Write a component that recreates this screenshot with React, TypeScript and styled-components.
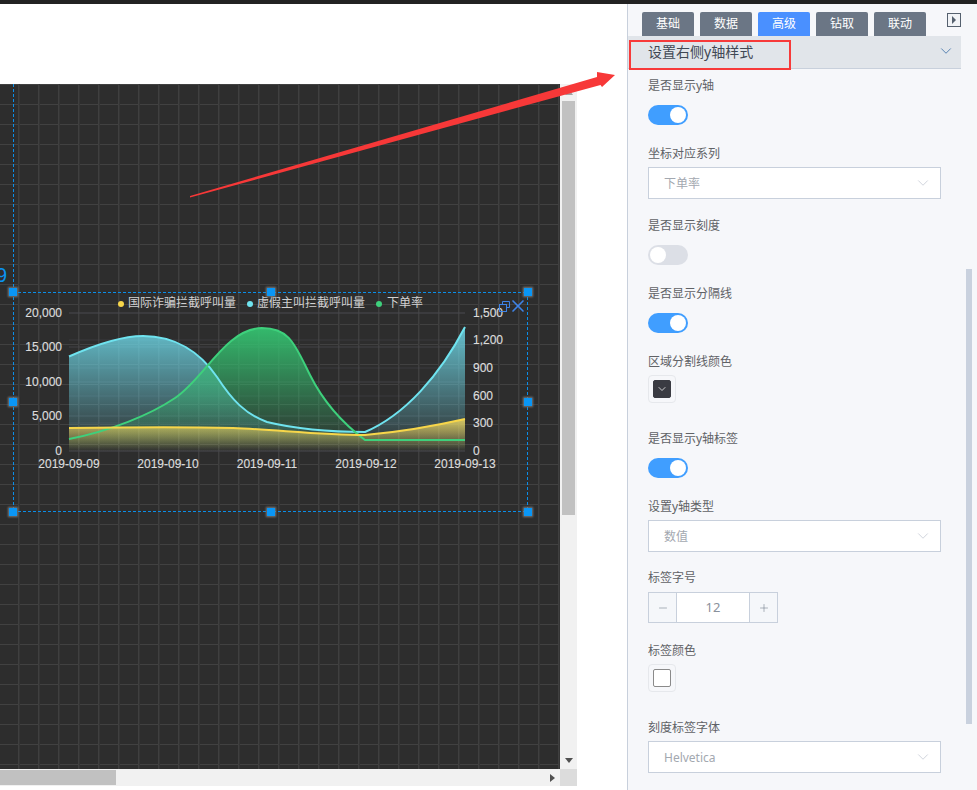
import React from 'react'
import styled, { createGlobalStyle } from 'styled-components'
import { ChevronDown, Minus, Plus, X } from 'lucide-react'

const GlobalStyle = createGlobalStyle`
  html, body {
    margin: 0;
    padding: 0;
    background: #fff;
    overflow: hidden;
  }
  body {
    font-family: "Noto Sans", "Noto Sans CJK SC", sans-serif;
  }
`

const Page = styled.div`
  position: relative;
  width: 977px;
  height: 790px;
  overflow: hidden;
  display: flex;
  flex-direction: column;
`

const TopBar = styled.div`
  height: 4px;
  flex: none;
  background: #222;
`

const Main = styled.div`
  flex: 1;
  display: flex;
  min-height: 0;
`

const Stage = styled.div`
  width: 627px;
  flex: none;
  padding-top: 80px;
  box-sizing: border-box;
  background: #fff;
`

const StageRow = styled.div`
  display: flex;
  width: 577px;
`

const Canvas = styled.div`
  position: relative;
  width: 560px;
  height: 685px;
  background-color: #2d2d2d;
  background-image:
    linear-gradient(to right, #3f3f3f 1px, #353535 1px, #353535 2px, transparent 2px),
    linear-gradient(to bottom, #414141 1px, transparent 1px);
  background-size: 20px 20px;
  background-position: -2px 0, 0 0;
`

const VScroll = styled.div`
  width: 17px;
  height: 685px;
  background: #f1f1f1;
  display: flex;
  flex-direction: column;
  align-items: center;
`

const HScroll = styled.div`
  width: 560px;
  height: 17px;
  background: #f1f1f1;
  display: flex;
  align-items: center;
`

const ScrollCorner = styled.div`
  width: 17px;
  height: 17px;
  background: #dcdcdc;
`

const VThumb = styled.div`
  width: 13px;
  height: 414px;
  background: #c1c1c1;
  margin-top: 6px;
`

const HThumb = styled.div`
  width: 116px;
  height: 15px;
  background: #c1c1c1;
`

const ArrowUp = styled.span`
  margin-top: 5px;
  border-left: 4px solid transparent;
  border-right: 4px solid transparent;
  border-bottom: 6px solid #a3a3a3;
`

const ArrowDown = styled.span`
  margin-top: auto;
  margin-bottom: 6px;
  border-left: 4px solid transparent;
  border-right: 4px solid transparent;
  border-top: 5px solid #505050;
`

const ArrowRight = styled.span`
  margin-left: auto;
  margin-right: 5px;
  border-top: 4px solid transparent;
  border-bottom: 4px solid transparent;
  border-left: 5px solid #505050;
`

const DASH = '#0b8ee8 0, #0b8ee8 3px, transparent 3px, transparent 5px'

const Guide = styled.div`
  position: absolute;
  left: 13px;
  top: 0;
  width: 1px;
  height: 208px;
  background: repeating-linear-gradient(to bottom, ${DASH});
`

const GuideValue = styled.span`
  position: absolute;
  left: -17px;
  top: 177px;
  font: 20px/28px "Liberation Sans", sans-serif;
  color: #0a93f0;
`

const Widget = styled.div`
  position: absolute;
  left: 13px;
  top: 208px;
  width: 515px;
  height: 220px;
  background:
    repeating-linear-gradient(to right, ${DASH}) top left / 100% 1px no-repeat,
    repeating-linear-gradient(to right, ${DASH}) bottom left / 100% 1px no-repeat,
    repeating-linear-gradient(to bottom, ${DASH}) top left / 1px 100% no-repeat,
    repeating-linear-gradient(to bottom, ${DASH}) top right / 1px 100% no-repeat;
`

const ChartSvg = styled.svg`
  position: absolute;
  left: 0;
  top: 0;
  width: 515px;
  height: 220px;
  overflow: visible;
`

const AxisLabel = styled.text`
  font: 12px "Liberation Sans", sans-serif;
  fill: #dcdcdc;
  stroke: #dcdcdc;
  stroke-width: 0.15px;
`

const LegendLabel = styled.text`
  font: 12px "Noto Sans CJK SC", sans-serif;
  fill: #d2d2d2;
`

const Handle = styled.span<{ $x: number; $y: number }>`
  position: absolute;
  left: ${(p) => p.$x}%;
  top: ${(p) => p.$y}%;
  width: 8px;
  height: 8px;
  margin: -4px 0 0 -4px;
  background: #0a96f5;
  box-shadow: 0 0 2px 1px #777;
`

const WidgetTools = styled.div`
  position: absolute;
  right: 0;
  top: 4px;
  display: flex;
  align-items: center;
  color: #3f83e6;
`

const CopyIcon = styled.svg`
  width: 11px;
  height: 11px;
  margin-right: -2px;
`

const Overlay = styled.svg`
  position: absolute;
  left: 0;
  top: 0;
  width: 977px;
  height: 790px;
  pointer-events: none;
`

const Callout = styled.div`
  position: absolute;
  left: 629px;
  top: 40px;
  width: 162px;
  height: 30px;
  box-sizing: border-box;
  border: 2px solid #f73a3a;
`

const Panel = styled.div`
  position: relative;
  flex: 1;
  background: #f6f7fa;
  border-left: 1px solid #c8d0dc;
`

const PanelThumb = styled.div`
  position: absolute;
  left: 338px;
  top: 265px;
  width: 6px;
  height: 455px;
  background: #c9d1de;
`

const Tabs = styled.div`
  display: flex;
  align-items: flex-start;
  gap: 6px;
  height: 32px;
  padding: 8px 0 0 14px;
  box-sizing: border-box;
`

const Tab = styled.div<{ $active?: boolean }>`
  width: 52px;
  height: 24px;
  border-radius: 2px 2px 0 0;
  background: ${(p) => (p.$active ? '#4a90ff' : '#6b7685')};
  color: #fff;
  font-size: 12px;
  line-height: 24px;
  text-align: center;
`

const CollapseButton = styled.div`
  width: 14px;
  height: 14px;
  margin: 1px 0 0 15px;
  border: 1px solid #55606e;
  background: #f1f3f6;
  display: flex;
  align-items: center;
  padding-left: 4px;
  box-sizing: border-box;

  &::before {
    content: '';
    border-top: 4px solid transparent;
    border-bottom: 4px solid transparent;
    border-left: 4px solid #55606e;
  }
`

const SectionHeader = styled.div`
  width: 333px;
  height: 33px;
  box-sizing: border-box;
  padding: 0 6px 2px 20px;
  background: #e1e5ea;
  border-bottom: 1px solid #c8d0dc;
  display: flex;
  align-items: center;
  justify-content: space-between;
  font-size: 14px;
  color: #3f4854;
`

const HeaderChevron = styled(ChevronDown)`
  color: #4a78ad;
`

const Form = styled.div`
  padding: 6px 0 0 20px;
  display: flex;
  flex-direction: column;
`

const Field = styled.div<{ $after: number }>`
  margin-bottom: ${(p) => p.$after}px;
`

const Label = styled.div<{ $gap: number }>`
  height: 20px;
  line-height: 21px;
  font-size: 12px;
  color: #606266;
  margin-bottom: ${(p) => p.$gap}px;
`

const Switch = styled.div<{ $on: boolean }>`
  width: 40px;
  height: 20px;
  border-radius: 10px;
  background: ${(p) => (p.$on ? '#409eff' : '#dcdfe6')};
  display: flex;
  align-items: center;
  justify-content: ${(p) => (p.$on ? 'flex-end' : 'flex-start')};
  padding: 0 2px;
  box-sizing: border-box;

  &::after {
    content: '';
    width: 16px;
    height: 16px;
    border-radius: 50%;
    background: #fff;
  }
`

const Select = styled.div`
  width: 293px;
  height: 32px;
  box-sizing: border-box;
  border: 1px solid #c8d0dc;
  background: #fff;
  padding: 0 15px;
  display: flex;
  align-items: center;
  justify-content: space-between;
  font-size: 12px;
  color: #a3a8b0;
`

const SelectChevron = styled(ChevronDown)`
  color: #c0c6d0;
  margin-right: -7px;
`

const Stepper = styled.div`
  width: 130px;
  height: 31px;
  box-sizing: border-box;
  border: 1px solid #c8d0dc;
  background: #fff;
  display: flex;
`

const StepButton = styled.div`
  width: 27px;
  background: #f5f7fa;
  display: flex;
  align-items: center;
  justify-content: center;
  color: #5f6a78;
  &:first-child { border-right: 1px solid #c8d0dc; }
  &:last-child { border-left: 1px solid #c8d0dc; }
`

const StepValue = styled.div`
  flex: 1;
  text-align: center;
  line-height: 29px;
  font-size: 13px;
  color: #8a919c;
`

const Swatch = styled.div`
  width: 28px;
  height: 28px;
  box-sizing: border-box;
  border: 1px solid #e6e8ec;
  border-radius: 4px;
  display: flex;
  align-items: center;
  justify-content: center;
`

const SwatchColor = styled.div<{ $color: string; $edge: string }>`
  width: 18px;
  height: 18px;
  box-sizing: border-box;
  border-radius: 2px;
  border: 1px solid ${(p) => p.$edge};
  background: ${(p) => p.$color};
  color: #fff;
  display: flex;
  align-items: center;
  justify-content: center;
`

const BASE_Y = 451

// curves traced from the chart, in page coordinates
const series = [
  {
    id: 'cyan',
    color: '#6fe3ef',
    fill: '#6fdcec',
    top: 0.85,
    gradTop: 325,
    d: 'M69 356.5 C95 345 120 336 143 336 C175 336 200 352 217 377 C232 400 245 414 267 422 C300 430 335 432 365 432 C405 415 440 375 465 327',
  },
  {
    id: 'green',
    color: '#3ed07c',
    fill: '#34c471',
    top: 0.95,
    gradTop: 325,
    d: 'M69 439 C110 431 150 415 175 398 C205 378 225 329 262 328 C290 328 295 345 310 375 C325 405 345 425 365 440 L465 440',
  },
  {
    id: 'yellow',
    color: '#f7d64a',
    fill: '#f0d860',
    top: 0.85,
    gradTop: 419,
    d: 'M69 428 C130 427 200 427 233 428 C280 430 320 435 365 435 C400 432 430 427 465 419',
  },
]

const leftTicks = [['20,000', 313], ['15,000', 347], ['10,000', 382], ['5,000', 416], ['0', 451]] as const
const rightTicks = [['1,500', 313], ['1,200', 340], ['900', 368], ['600', 396], ['300', 423], ['0', 451]] as const
const dates = [['2019-09-09', 69], ['2019-09-10', 168], ['2019-09-11', 267], ['2019-09-12', 366], ['2019-09-13', 465]] as const
const handles = [[0, 0], [50, 0], [100, 0], [0, 50], [100, 50], [0, 100], [50, 100], [100, 100]]
const legend = [
  { label: '国际诈骗拦截呼叫量', color: '#f7d64a', dot: 121, text: 128 },
  { label: '虚假主叫拦截呼叫量', color: '#6fe3ef', dot: 250, text: 257 },
  { label: '下单率', color: '#3ed07c', dot: 379, text: 387 },
]

const AreaChart = () => (
  <ChartSvg viewBox="13 292 515 220">
    <defs>
      {series.map((s) => (
        <linearGradient key={s.id} id={s.id} gradientUnits="userSpaceOnUse" x1="0" y1={s.gradTop} x2="0" y2={BASE_Y}>
          <stop offset="0" stopColor={s.fill} stopOpacity={s.top} />
          <stop offset="1" stopColor={s.fill} stopOpacity="0" />
        </linearGradient>
      ))}
    </defs>
    {leftTicks.map(([, y]) => (
      <line key={y} x1="69" x2="465" y1={y} y2={y} stroke="#4a4a50" strokeOpacity="0.7" />
    ))}
    {rightTicks.map(([, y]) => (
      <line key={y} x1="69" x2="465" y1={y} y2={y} stroke="#4a4a50" strokeOpacity="0.5" />
    ))}
    {series.map((s) => (
      <path key={s.id} d={`${s.d} L465 ${BASE_Y} L69 ${BASE_Y} Z`} fill={`url(#${s.id})`} />
    ))}
    {series.map((s) => (
      <path key={s.id} d={s.d} fill="none" stroke={s.color} strokeWidth="2" />
    ))}
    {leftTicks.map(([t, y]) => (
      <AxisLabel key={t} x="62" y={y + 4} textAnchor="end">{t}</AxisLabel>
    ))}
    {rightTicks.map(([t, y]) => (
      <AxisLabel key={t} x="473" y={y + 4}>{t}</AxisLabel>
    ))}
    {dates.map(([t, x]) => (
      <AxisLabel key={t} x={x} y="468" textAnchor="middle">{t}</AxisLabel>
    ))}
    {legend.map((l) => (
      <g key={l.label}>
        <circle cx={l.dot} cy="304" r="3" fill={l.color} />
        <LegendLabel x={l.text} y="307">{l.label}</LegendLabel>
      </g>
    ))}
  </ChartSvg>
)

const Dropdown = ({ value }: { value: string }) => (
  <Select>
    {value}
    <SelectChevron size={18} strokeWidth={1} />
  </Select>
)

const App = () => (
  <Page>
    <GlobalStyle />
    <TopBar />
    <Main>
      <Stage>
        <StageRow>
          <Canvas>
            <Guide>
              <GuideValue>9</GuideValue>
            </Guide>
            <Widget>
              <AreaChart />
              <WidgetTools>
                <CopyIcon viewBox="0 0 11 11" fill="none" stroke="currentColor">
                  <path d="M3.5 3V.5h7v6H8" />
                  <rect x="0.5" y="3.5" width="7" height="7" />
                </CopyIcon>
                <X size={20} strokeWidth={2} />
              </WidgetTools>
              {handles.map(([x, y]) => (
                <Handle key={`${x}-${y}`} $x={x} $y={y} />
              ))}
            </Widget>
          </Canvas>
          <VScroll>
            <ArrowUp />
            <VThumb />
            <ArrowDown />
          </VScroll>
        </StageRow>
        <StageRow>
          <HScroll>
            <HThumb />
            <ArrowRight />
          </HScroll>
          <ScrollCorner />
        </StageRow>
      </Stage>
      <Panel>
        <Tabs>
          <Tab>基础</Tab>
          <Tab>数据</Tab>
          <Tab $active>高级</Tab>
          <Tab>钻取</Tab>
          <Tab>联动</Tab>
          <CollapseButton />
        </Tabs>
        <SectionHeader>
          设置右侧y轴样式
          <HeaderChevron size={18} strokeWidth={1.2} />
        </SectionHeader>
        <Form>
          <Field $after={18}>
            <Label $gap={10}>是否显示y轴</Label>
            <Switch $on />
          </Field>
          <Field $after={16}>
            <Label $gap={4}>坐标对应系列</Label>
            <Dropdown value="下单率" />
          </Field>
          <Field $after={18}>
            <Label $gap={10}>是否显示刻度</Label>
            <Switch $on={false} />
          </Field>
          <Field $after={18}>
            <Label $gap={10}>是否显示分隔线</Label>
            <Switch $on />
          </Field>
          <Field $after={25}>
            <Label $gap={4}>区域分割线颜色</Label>
            <Swatch>
              <SwatchColor $color="#3a3b42" $edge="#3a3b42">
                <ChevronDown size={12} strokeWidth={1.5} />
              </SwatchColor>
            </Swatch>
          </Field>
          <Field $after={18}>
            <Label $gap={10}>是否显示y轴标签</Label>
            <Switch $on />
          </Field>
          <Field $after={15}>
            <Label $gap={4}>设置y轴类型</Label>
            <Dropdown value="数值" />
          </Field>
          <Field $after={17}>
            <Label $gap={5}>标签字号</Label>
            <Stepper>
              <StepButton><Minus size={12} strokeWidth={1} /></StepButton>
              <StepValue>12</StepValue>
              <StepButton><Plus size={12} strokeWidth={1} /></StepButton>
            </Stepper>
          </Field>
          <Field $after={25}>
            <Label $gap={4}>标签颜色</Label>
            <Swatch>
              <SwatchColor $color="#fff" $edge="#8a8a8a" />
            </Swatch>
          </Field>
          <Field $after={0}>
            <Label $gap={4}>刻度标签字体</Label>
            <Dropdown value="Helvetica" />
          </Field>
        </Form>
        <PanelThumb />
      </Panel>
    </Main>
    <Overlay viewBox="0 0 977 790">
      <polygon points="190,196 597,77 597,72 615,75 602,87 600.5,85 190,197.5" fill="#f73838" />
    </Overlay>
    <Callout />
  </Page>
)

export default App
